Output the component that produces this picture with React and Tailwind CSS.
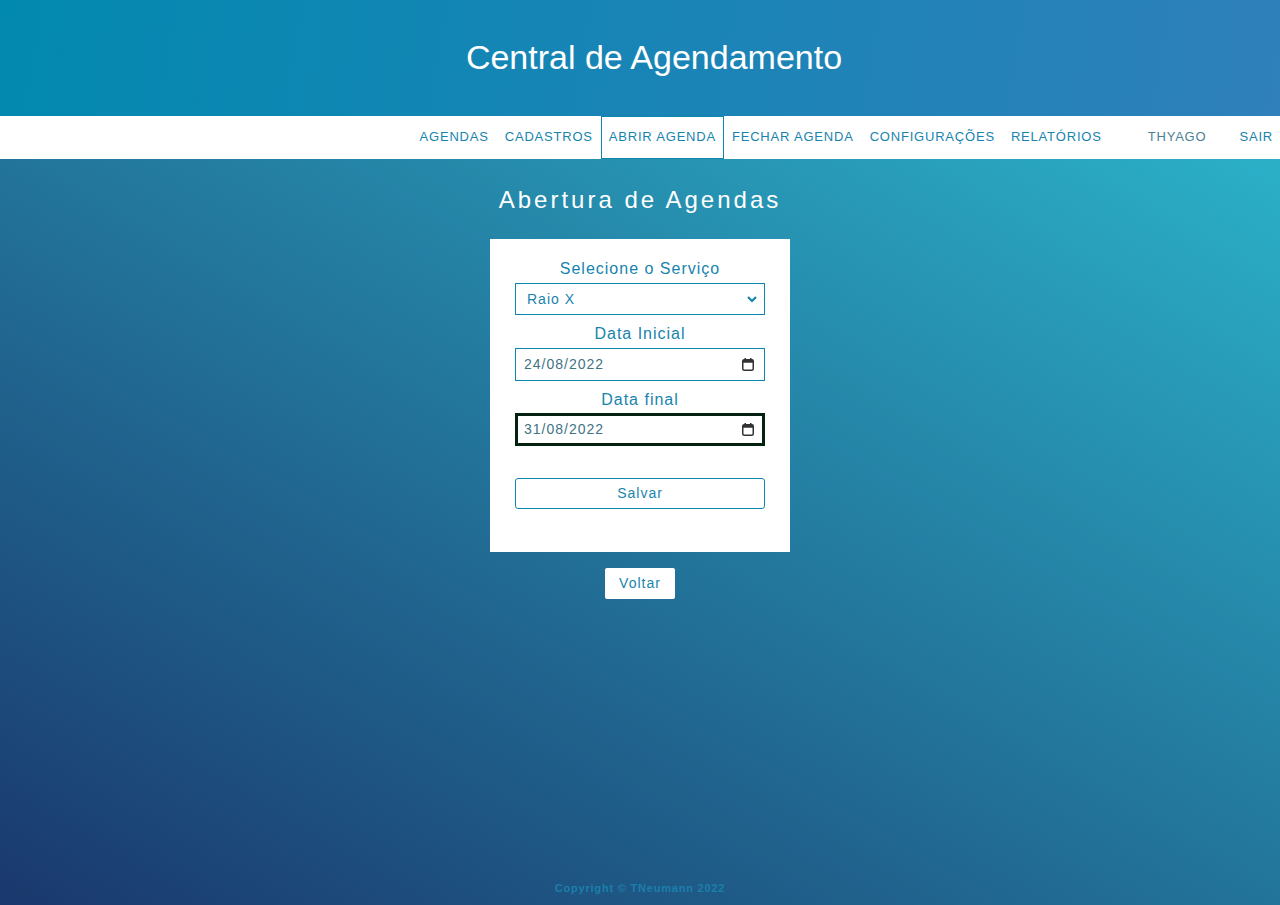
import React from "react";

function CalendarIcon() {
  return (
    <svg width="12" height="13" viewBox="0 0 12 13" className="shrink-0">
      <rect x="0.75" y="1.75" width="10.5" height="10.5" rx="1.5" fill="none" stroke="#333" strokeWidth="1.5" />
      <rect x="0.75" y="1.75" width="10.5" height="3" fill="#333" />
      <rect x="2.5" y="0" width="1.5" height="2.5" fill="#333" />
      <rect x="8" y="0" width="1.5" height="2.5" fill="#333" />
    </svg>
  );
}

function FakeDate({ value, focused }) {
  return (
    <div
      className={
        "w-[250px] h-[33px] bg-white flex items-center justify-between " +
        (focused ? "border-[3px] border-[#04200f] pl-[6px] pr-[8px]" : "border border-[#0d86ad] pl-[8px] pr-[10px]")
      }
    >
      <span className="text-[14px] tracking-[1px] text-[#3f7384]">{value}</span>
      <CalendarIcon />
    </div>
  );
}

export default function App() {
  const nav = [
    { t: "AGENDAS" },
    { t: "CADASTROS" },
    { t: "ABRIR AGENDA", active: true },
    { t: "FECHAR AGENDA" },
    { t: "CONFIGURAÇÕES" },
    { t: "RELATÓRIOS" },
  ];
  return (
    <div className="w-[1280px] h-[905px] flex flex-col overflow-hidden font-['Liberation_Sans',Arial,sans-serif]">
      <header className="h-[116px] shrink-0 flex items-center justify-center bg-[linear-gradient(100deg,#0289b0,#2f80bb)]">
        <h1 className="text-white text-[34px] leading-none -mt-[2px] ml-[28px]">Central de Agendamento</h1>
      </header>
      <nav className="h-[43px] shrink-0 bg-white flex items-stretch justify-end text-[13px] tracking-[0.8px] text-[#1784ad]">
        {nav.map((n) => (
          <div
            key={n.t}
            className={
              "flex items-center px-[7px] pb-[1px] " +
              (n.active ? "border border-[#0d86ad]" : "border border-transparent")
            }
          >
            {n.t}
          </div>
        ))}
        <div className="flex items-center pb-[1px] px-[7px] ml-[31px] text-[#4b7f93]">THYAGO</div>
        <div className="flex items-center pb-[1px] px-[7px] ml-[19px]">SAIR</div>
      </nav>
      <main className="flex-1 flex flex-col items-center bg-[linear-gradient(to_top_right,#1a386d,#2bb0c8)]">
        <h2 className="mt-[29px] text-white text-[24px] tracking-[3px] leading-none h-[27px]">Abertura de Agendas</h2>
        <div className="mt-[24px] w-[300px] h-[313px] bg-white flex flex-col items-center pt-[20px]">
          <label className="text-[16px] tracking-[1px] text-[#1784ad] leading-[19px]">Selecione o Serviço</label>
          <div className="mt-[5px] w-[250px] h-[32px] border border-[#0d86ad] flex items-center justify-between pl-[11px] pr-[6px]">
            <span className="text-[14px] tracking-[1px] text-[#1784ad]">Raio X</span>
            <svg width="12" height="8" viewBox="0 0 12 8">
              <path d="M2 2 L6 6 L10 2" fill="none" stroke="#1784ad" strokeWidth="2.2" />
            </svg>
          </div>
          <label className="mt-[9px] text-[16px] tracking-[1px] text-[#1784ad] leading-[19px]">Data Inicial</label>
          <div className="mt-[5px]">
            <FakeDate value="24/08/2022" />
          </div>
          <label className="mt-[9px] text-[16px] tracking-[1px] text-[#1784ad] leading-[19px]">Data final</label>
          <div className="mt-[4px]">
            <FakeDate value="31/08/2022" focused />
          </div>
          <button className="mt-[32px] w-[250px] h-[31px] border border-[#0d86ad] rounded-[3px] bg-white text-[14px] tracking-[1px] text-[#1784ad]">
            Salvar
          </button>
        </div>
        <button className="mt-[16px] w-[70px] h-[31px] bg-white rounded-[2px] text-[14px] tracking-[1px] text-[#1784ad]">
          Voltar
        </button>
        <div className="flex-1" />
        <footer className="mb-[9px] text-[11px] font-bold tracking-[0.8px] text-[#1b7fab]">Copyright © TNeumann 2022</footer>
      </main>
    </div>
  );
}
